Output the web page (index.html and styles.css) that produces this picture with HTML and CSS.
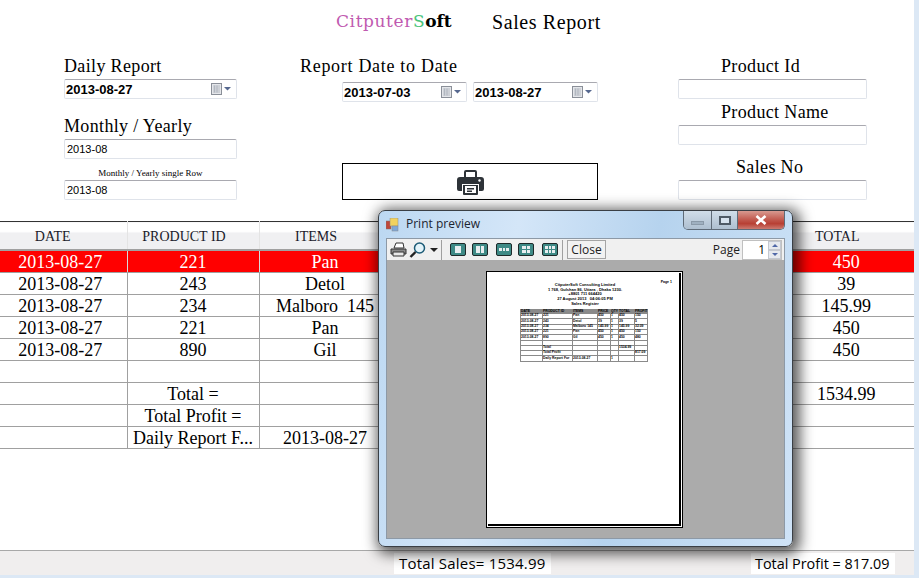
FILE: index.html
```html
<!DOCTYPE html>
<html lang="en">
<head>
    <meta charset="UTF-8">
    <meta name="viewport" content="width=device-width, initial-scale=1.0">
    <title>Sales Report</title>
    <link rel="stylesheet" href="styles.css">
</head>
<body>

<div class="page">
    <header class="top-bar">
        <div class="logo">Citputer<span class="logo-s">S</span><span class="logo-end">oft</span></div>
        <h1>Sales Report</h1>
    </header>

    <section class="filters">
        <div class="col-left">
            <label>Daily Report</label>
            <div class="date-box">
                <span>2013-08-27</span>
                <svg class="cal" viewBox="0 0 20 12" width="20" height="12"><rect x="0.500" y="0.500" width="10" height="11" fill="#e4e6ea" stroke="#8a8f98"/><path d="M2 3h7M2 5h7M2 7h7M2 9h7M3.500 2.500v7M6 2.500v7" stroke="#aab0ba" stroke-width="0.800"/><path d="M13 4h7l-3.500 3.500z" fill="#56688f"/></svg>
            </div>
            <label class="gap-label">Monthly / Yearly</label>
            <div class="text-box">2013-08</div>
            <label class="tiny-label">Monthly / Yearly single Row</label>
            <div class="text-box">2013-08</div>
        </div>

        <div class="col-mid">
            <label>Report Date to Date</label>
            <div class="date-row">
                <div class="date-box">
                    <span>2013-07-03</span>
                    <svg class="cal" viewBox="0 0 20 12" width="20" height="12"><rect x="0.500" y="0.500" width="10" height="11" fill="#e4e6ea" stroke="#8a8f98"/><path d="M2 3h7M2 5h7M2 7h7M2 9h7M3.500 2.500v7M6 2.500v7" stroke="#aab0ba" stroke-width="0.800"/><path d="M13 4h7l-3.500 3.500z" fill="#56688f"/></svg>
                </div>
                <div class="date-box">
                    <span>2013-08-27</span>
                    <svg class="cal" viewBox="0 0 20 12" width="20" height="12"><rect x="0.500" y="0.500" width="10" height="11" fill="#e4e6ea" stroke="#8a8f98"/><path d="M2 3h7M2 5h7M2 7h7M2 9h7M3.500 2.500v7M6 2.500v7" stroke="#aab0ba" stroke-width="0.800"/><path d="M13 4h7l-3.500 3.500z" fill="#56688f"/></svg>
                </div>
            </div>
            <div class="print-btn">
                <svg viewBox="0 0 27 26" width="27" height="26"><path d="M7 9V3a2 2 0 0 1 2-2h9a2 2 0 0 1 2 2v6z M3 8h21a3 3 0 0 1 3 3v9a2 2 0 0 1-2 2h-3v-7H5v7H2a2 2 0 0 1-2-2v-9a3 3 0 0 1 3-3z M6 16h15v9a1 1 0 0 1-1 1H7a1 1 0 0 1-1-1z" fill="#2e3338"/><path d="M9 3h9v5H9z" fill="#fff"/><path d="M8 17h11v7H8z" fill="#fff"/><path d="M10 19h7v1.500h-7zM10 21.500h5V23h-5z" fill="#2e3338"/><circle cx="22.500" cy="11.500" r="1.200" fill="#fff"/></svg>
            </div>
        </div>

        <div class="col-right">
            <label>Product Id</label>
            <div class="text-box"></div>
            <label class="mid-label">Product Name</label>
            <div class="text-box"></div>
            <label class="sales-label">Sales No</label>
            <div class="text-box"></div>
        </div>
    </section>

    <table class="grid">
        <colgroup>
            <col class="c-date"><col class="c-id"><col class="c-items"><col><col><col class="c-total">
        </colgroup>
        <thead>
            <tr><th class="first">DATE</th><th>PRODUCT ID</th><th>ITEMS</th><th></th><th></th><th>TOTAL</th></tr>
        </thead>
        <tbody>
            <tr class="selected"><td class="first">2013-08-27</td><td>221</td><td>Pan</td><td></td><td></td><td>450</td></tr>
            <tr><td class="first">2013-08-27</td><td>243</td><td>Detol</td><td></td><td></td><td>39</td></tr>
            <tr><td class="first">2013-08-27</td><td>234</td><td>Malboro&nbsp; 145</td><td></td><td></td><td>145.99</td></tr>
            <tr><td class="first">2013-08-27</td><td>221</td><td>Pan</td><td></td><td></td><td>450</td></tr>
            <tr><td class="first">2013-08-27</td><td>890</td><td>Gil</td><td></td><td></td><td>450</td></tr>
            <tr><td></td><td></td><td></td><td></td><td></td><td></td></tr>
            <tr><td></td><td>Total =</td><td></td><td></td><td></td><td>1534.99</td></tr>
            <tr><td></td><td>Total Profit =</td><td></td><td></td><td></td><td></td></tr>
            <tr><td></td><td>Daily Report F...</td><td>2013-08-27</td><td></td><td></td><td></td></tr>
        </tbody>
    </table>

    <footer class="totals">
        <span class="total-sales">Total Sales= 1534.99</span>
        <span class="total-profit">Total Profit = 817.09</span>
    </footer>
</div>

<!-- print preview window sits over the report -->
<div class="dialog">
    <div class="title-bar">
        <svg class="app-icon" viewBox="0 0 14 14" width="14" height="14"><rect x="0" y="3" width="5" height="8" fill="#c0473a" stroke="#777" stroke-width="0.500"/><rect x="4" y="0" width="8" height="8" fill="#f2d25e" stroke="#888" stroke-width="0.500"/><rect x="6" y="8" width="6" height="5" fill="#7fa8d8" stroke="#888" stroke-width="0.500"/></svg>
        <span class="title-text">Print preview</span>
        <div class="win-btns">
            <div class="win-btn win-min"><i></i></div>
            <div class="win-btn win-max"><i></i></div>
            <div class="win-btn win-close">
                <svg viewBox="0 0 12 10" width="12" height="10"><path d="M1.500 1L10.500 9M10.500 1L1.500 9" stroke="#fff" stroke-width="2.600"/></svg>
            </div>
        </div>
    </div>
    <div class="toolbar">
        <svg class="tool-print" viewBox="0 0 17 15" width="17" height="15"><path d="M4 6l2-5h7l1 5z" fill="#fff" stroke="#333"/><path d="M1 7h15v5H1z" fill="#8a8a8a" stroke="#333"/><path d="M3 10h11v4H3z" fill="#e8e8e8" stroke="#333"/></svg>
        <svg class="tool-zoom" viewBox="0 0 17 16" width="17" height="16"><circle cx="10.500" cy="6" r="5" fill="#e4f4fa" stroke="#1c5b76" stroke-width="1.500"/><path d="M6.500 10L1.500 15" stroke="#222" stroke-width="2.400"/></svg>
        <i class="tool-arrow"></i>
        <i class="tool-sep"></i>
        <div class="view-btn view-one"><b></b></div>
        <div class="view-btn view-two"><b></b><b></b></div>
        <div class="view-btn view-three"><b></b><b></b><b></b></div>
        <div class="view-btn view-four"><b></b><b></b><b></b><b></b></div>
        <div class="view-btn view-six"><b></b><b></b><b></b><b></b><b></b><b></b></div>
        <i class="tool-sep sep-close"></i>
        <div class="close-btn">Close</div>
        <span class="page-label">Page</span>
        <div class="spin">
            <span class="spin-val">1</span>
            <div class="spin-arrows">
                <div class="spin-up"><i></i></div>
                <div class="spin-down"><i></i></div>
            </div>
        </div>
    </div>
    <div class="preview">
        <div class="sheet">
            <div class="sheet-no">Page 1</div>
            <div class="sheet-head">
                <div>CitputerSoft Consulting Limited</div>
                <div>1 768, Gulshan 86, Uttara , Dhaka 1230.</div>
                <div>+8801 711 664420</div>
                <div>27 August 2013 &nbsp; 04:06:05 PM</div>
                <div>Sales Register</div>
            </div>
            <table class="mini">
                <tr class="mini-head"><td>DATE</td><td>PRODUCT ID</td><td>ITEMS</td><td>PRICE</td><td>QTY</td><td>TOTAL</td><td>PROFIT</td></tr>
                <tr><td>2013-08-27</td><td>221</td><td>Pan</td><td>450</td><td>1</td><td>450</td><td>150</td></tr>
                <tr><td>2013-08-27</td><td>243</td><td>Detol</td><td>39</td><td>1</td><td>39</td><td>5</td></tr>
                <tr><td>2013-08-27</td><td>234</td><td>Malboro 145</td><td>145.99</td><td>1</td><td>145.99</td><td>32.09</td></tr>
                <tr><td>2013-08-27</td><td>221</td><td>Pan</td><td>450</td><td>1</td><td>450</td><td>150</td></tr>
                <tr><td>2013-08-27</td><td>890</td><td>Gil</td><td>450</td><td>1</td><td>450</td><td>480</td></tr>
                <tr><td></td><td></td><td></td><td></td><td></td><td></td><td></td></tr>
                <tr><td></td><td>Total</td><td></td><td></td><td></td><td>1534.99</td><td></td></tr>
                <tr><td></td><td>Total Profit</td><td></td><td></td><td></td><td></td><td>817.09</td></tr>
                <tr><td></td><td>Daily Report For</td><td>2013-08-27</td><td></td><td>1</td><td></td><td></td></tr>
            </table>
        </div>
    </div>
</div>

</body>
</html>
```

FILE: styles.css
```css
* {
    box-sizing: border-box;
}
body {
    margin: 0;
    width: 919px;
    height: 578px;
    overflow: hidden;
    background-color: #dce8f5;
    font-family: "Liberation Serif", serif;
    color: #000;
}
.page {
    width: 914px;
    height: 575px;
    background-color: #fff;
    display: flex;
    flex-direction: column;
}

/* header */
.top-bar {
    height: 57px;
    padding: 8px 0 0 336px;
    display: flex;
    align-items: flex-start;
}
.logo {
    width: 156px;
    font-family: "DejaVu Serif", serif;
    font-size: 17px;
    line-height: 26px;
    letter-spacing: 0.600px;
    font-weight: normal;
    color: #c05ab0;
}
.logo-s {
    color: #4cc47c;
}
.logo-end {
    color: #000;
    letter-spacing: 0;
    font-weight: bold;
}
.top-bar h1 {
    margin: 0;
    font-size: 20px;
    font-weight: normal;
    letter-spacing: 0.600px;
    line-height: 28px;
}

/* filter form */
.filters {
    height: 164px;
    display: flex;
    padding-left: 64px;
}
label {
    display: block;
    margin: -1px 0 2px;
    font-size: 18px;
    line-height: 21px;
    letter-spacing: 0.350px;
}
.col-left {
    width: 173px;
    margin-right: 63px;
}
.gap-label {
    margin-top: 17px;
}
.tiny-label {
    margin: 8px 0 0;
    font-size: 9px;
    line-height: 13px;
    letter-spacing: 0;
    text-align: center;
}
.date-box, .text-box {
    height: 20px;
    border: 1px solid #dfe3ea;
    border-top-color: #a9a9b0;
    border-radius: 2px;
    background-color: #fff;
    font-family: "Liberation Sans", sans-serif;
}
.date-box {
    display: flex;
    align-items: center;
    justify-content: space-between;
    padding: 0 5px 0 1px;
    font-size: 13px;
    font-weight: bold;
}
.text-box {
    padding-left: 2px;
    font-size: 11px;
    line-height: 19px;
}
.col-mid {
    width: 298px;
    margin-right: 80px;
}
.col-mid label {
    letter-spacing: 0.700px;
}
.date-row {
    margin: 5px 0 0 42px;
    display: flex;
    gap: 6px;
}
.date-row .date-box {
    width: 125px;
}
.print-btn {
    margin: 61px 0 0 42px;
    width: 256px;
    height: 37px;
    border: 1px solid #000;
    display: flex;
    align-items: center;
    justify-content: center;
}
.col-right {
    width: 189px;
}
.col-right label {
    padding-left: 43px;
}
.mid-label {
    margin-top: 3px;
}
.col-right .sales-label {
    margin-top: 12px;
    padding-left: 58px;
}

/* report grid */
.grid {
    width: 914px;
    table-layout: fixed;
    border-collapse: collapse;
    border-top: 1px solid #333;
}
.c-date { width: 127px; }
.c-id { width: 132px; }
.c-items { width: 132px; }
.c-total { width: 136px; }
.grid th {
    height: 28px;
    padding: 4px 18px 0 0;
    font-size: 14px;
    font-weight: normal;
    border-right: 1px solid #e4e4e4;
    border-bottom: 2px solid #a0a0a0;
    background: linear-gradient(#fff 0, #fff 35%, #f0f0f2 36%, #f0f0f2 100%);
    color: #1a1a2a;
}
.grid th.first {
    padding-right: 21px;
}
.grid td {
    height: 22px;
    padding: 1px 0 0;
    font-size: 18px;
    line-height: 20px;
    text-align: center;
    white-space: nowrap;
    overflow: hidden;
    border-right: 1px solid #a0a0a0;
    border-bottom: 1px solid #a0a0a0;
}
.grid td.first {
    padding-right: 6px;
}
.grid .selected td {
    background-color: #f00;
    color: #fff;
    border-right-color: #d8d8d8;
}
.grid th:last-child, .grid td:last-child {
    border-right: none;
}

/* bottom totals */
.totals {
    margin-top: auto;
    height: 25px;
    padding: 2px 0 0 394px;
    border-top: 1px solid #a8a8a8;
    background-color: #f0eeee;
    display: flex;
    font-family: "Open Sans", sans-serif;
    line-height: 21px;
}
.total-sales, .total-profit {
    background-color: #fff;
    height: 21px;
    padding-left: 5px;
}
.total-sales {
    width: 157px;
    font-size: 15px;
    letter-spacing: 0.200px;
}
.total-profit {
    width: 144px;
    margin-left: 200px;
    padding-left: 4px;
    font-size: 14.400px;
}

/* print preview window */
.dialog {
    position: absolute;
    left: 378px;
    top: 210px;
    width: 415px;
    height: 337px;
    padding: 0 7px 7px;
    border: 1px solid #3a3f45;
    border-radius: 7px;
    background: linear-gradient(100deg, #bcd8f2 0, #d4e6f8 30%, #b6d3ee 60%, #cfe3f7 100%);
    box-shadow: 3px 3px 14px 4px rgba(0, 0, 0, 0.650);
    display: flex;
    flex-direction: column;
    font-family: "Open Sans", sans-serif;
}
.title-bar {
    height: 27px;
    flex: none;
    display: flex;
    align-items: flex-start;
}
.app-icon {
    margin-top: 7px;
}
.title-text {
    margin: 4px 0 0 6px;
    font-size: 12px;
    line-height: 18px;
    color: #1c2430;
}
.win-btns {
    margin-left: auto;
    display: flex;
    height: 19px;
    border: 1px solid #5f6b78;
    border-top: none;
    border-radius: 0 0 5px 5px;
    overflow: hidden;
}
.win-btn {
    display: flex;
    align-items: center;
    justify-content: center;
    border-right: 1px solid #5f6b78;
    background: linear-gradient(#d0dde9, #aebfd0);
}
.win-min {
    width: 28px;
}
.win-min i {
    width: 13px;
    height: 4px;
    margin-top: 5px;
    background-color: #9fb0c0;
    border: 1px solid #8a99a8;
}
.win-max {
    width: 26px;
}
.win-max i {
    width: 12px;
    height: 9px;
    border: 2px solid #4e5a66;
    background-color: #d6e2ee;
}
.win-close {
    width: 46px;
    border-right: none;
    background: linear-gradient(#d89a90, #c1574c 50%, #b84034 70%, #cc7a70);
}
.toolbar {
    height: 22px;
    flex: none;
    padding-left: 3px;
    display: flex;
    align-items: center;
    background-color: #f0f0f0;
    border: 1px solid #8d99a6;
    border-bottom: none;
    font-size: 12px;
}
.tool-zoom {
    margin-left: 2px;
}
.tool-arrow {
    margin-left: 4px;
    width: 0;
    height: 0;
    border-left: 4px solid transparent;
    border-right: 4px solid transparent;
    border-top: 4px solid #222;
}
.tool-sep {
    margin-left: 3px;
    width: 1px;
    height: 20px;
    background-color: #a0a0a0;
}
.view-btn {
    margin-left: 7px;
    width: 16px;
    height: 13px;
    padding: 2px 3px;
    border: 1px solid #1e2a2a;
    border-radius: 2px;
    background-color: #3e8a86;
    display: grid;
    gap: 1px;
}
.view-btn b {
    background-color: #e8eef0;
}
.view-one {
    margin-left: 8px;
    padding: 2px 4px;
}
.view-two {
    margin-left: 6px;
    grid-template-columns: 1fr 1fr;
}
.view-three {
    margin-left: 8px;
    grid-template-columns: 1fr 1fr 1fr;
    padding: 4px 2px;
}
.view-four {
    margin-left: 6px;
    grid-template-columns: 1fr 1fr;
    grid-template-rows: 1fr 1fr;
}
.view-six {
    margin-left: 8px;
    grid-template-columns: 1fr 1fr 1fr;
    grid-template-rows: 1fr 1fr;
    padding: 2px;
}
.sep-close {
    margin-left: 4px;
}
.close-btn {
    margin-left: 4px;
    width: 39px;
    height: 19px;
    border: 1px solid #a5a5a5;
    text-align: center;
    line-height: 17px;
    font-size: 12px;
    background-color: #f2f2f2;
    color: #222;
}
.page-label {
    margin-left: auto;
    margin-right: 2px;
    font-size: 12px;
    color: #222;
}
.spin {
    width: 40px;
    height: 20px;
    margin-right: 2px;
    border: 1px solid #c0c0c0;
    background-color: #fff;
    display: flex;
    justify-content: flex-end;
}
.spin-val {
    line-height: 17px;
    margin-right: 3px;
}
.spin-arrows {
    width: 13px;
    display: flex;
    flex-direction: column;
}
.spin-up, .spin-down {
    flex: 1;
    display: flex;
    align-items: center;
    justify-content: center;
    background-color: #e6e9ee;
    border: 1px solid #c4c8d0;
}
.spin-up i, .spin-down i {
    width: 0;
    height: 0;
    border-left: 3px solid transparent;
    border-right: 3px solid transparent;
}
.spin-up i {
    border-bottom: 3px solid #5068a8;
}
.spin-down i {
    border-top: 3px solid #5068a8;
}
.preview {
    flex: 1;
    padding: 11px 0 0 99px;
    background-color: #ababab;
    border: 1px solid #8d99a6;
    border-top: none;
}
.sheet {
    position: relative;
    width: 197px;
    height: 257px;
    background-color: #fff;
    border: 1px solid #000;
    box-shadow: inset 0 0 0 1px #fff, inset -1px -1px 0 2px #000;
    font-family: "Liberation Sans", sans-serif;
    color: #000;
}
.sheet-no {
    position: absolute;
    right: 10px;
    top: 8px;
    font-size: 3.500px;
    font-weight: bold;
}
.sheet-head {
    padding-top: 11px;
    margin-left: 34px;
    width: 128px;
    text-align: center;
    font-size: 4px;
    line-height: 4.700px;
    font-weight: bold;
}
.mini {
    margin: 2px 0 0 33px;
    width: 128px;
    table-layout: fixed;
    border-collapse: collapse;
    border: 1px solid #8a8a8a;
    font-size: 3.400px;
    font-weight: bold;
}
.mini td {
    height: 5.300px;
    padding: 0;
    line-height: 3.500px;
    white-space: nowrap;
    border: 1px solid #8a8a8a;
}
.mini td:nth-child(1) { width: 22px; }
.mini td:nth-child(2) { width: 30px; }
.mini td:nth-child(3) { width: 25px; }
.mini td:nth-child(4) { width: 13px; }
.mini td:nth-child(5) { width: 8px; }
.mini td:nth-child(6) { width: 16px; }
.mini-head td {
    height: 4px;
    background-color: #8a8a8a;
}
```
